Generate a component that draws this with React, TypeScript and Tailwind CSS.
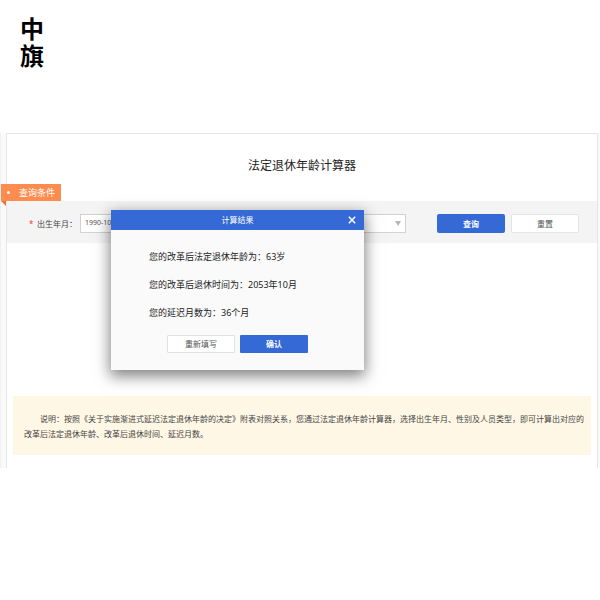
import { useState } from "react";

const results = [
  "您的改革后法定退休年龄为：63岁",
  "您的改革后退休时间为：2053年10月",
  "您的延迟月数为：36个月",
];

function ResultDialog() {
  return (
    <section
      role="dialog"
      aria-labelledby="result-title"
      className="absolute left-[104px] top-[76px] w-[253px] bg-[#fafafa] shadow-[0_5px_14px_1px_rgba(0,0,0,0.5)]"
    >
      <header className="relative flex h-5 items-center justify-center bg-[#3569d6] text-white">
        <h2 id="result-title" className="text-[8px] leading-5">
          计算结果
        </h2>
        <button type="button" aria-label="关闭" className="absolute right-2 top-1.5">
          <svg viewBox="0 0 8 8" className="size-2" fill="none" stroke="currentColor" strokeWidth="1.5">
            <path d="M0.8 0.8 7.2 7.2M7.2 0.8 0.8 7.2" />
          </svg>
        </button>
      </header>
      <div className="flex flex-col gap-2 pl-[38px] pt-[17px] text-[9px] leading-5 text-[#222]">
        {results.map((line) => (
          <p key={line}>{line}</p>
        ))}
      </div>
      <div className="flex justify-center gap-[5px] pb-[17px] pt-3 text-[8px]">
        <button type="button" className="h-[18px] w-[68px] rounded-[1px] border border-[#e2e2e2] bg-white text-[#555]">
          重新填写
        </button>
        <button type="button" className="h-[18px] w-[68px] rounded-[1px] bg-[#3569d6] font-bold text-white">
          确认
        </button>
      </div>
    </section>
  );
}

export default function App() {
  const [month, setMonth] = useState("1990-10");

  return (
    <div className="min-h-screen bg-white font-['Noto_Sans','Noto_Sans_CJK_SC',sans-serif]">
      <header className="flex h-[133px] pl-5 pt-[15px]">
        <h1 className="w-6 text-[24px] font-bold leading-[27px] text-black">中旗</h1>
      </header>

      <main className="border-l border-[#f0f0f0] bg-[#fafafa] pl-[5px] pr-[2px]">
        <div className="relative border-x border-t border-[#e6e6e6] bg-white pb-[13px]">
          <h2 className="pt-[22px] text-center text-[12px] leading-5 text-[#222]">法定退休年龄计算器</h2>

          <div className="-ml-[6px] mt-2 flex">
            <h3 className="relative flex h-[17px] w-[60px] items-center bg-[#ff8c4f] pl-1.5 text-[9px] text-white">
              <span className="mr-[9px] size-[3px] rounded-full bg-white" />
              查询条件
              <svg viewBox="0 0 5 5" className="absolute left-0 top-full size-[5px]">
                <path d="M0 0H5V5Z" fill="#e8743a" />
              </svg>
            </h3>
          </div>

          <form className="flex h-[42px] items-center bg-[#f4f4f4] pl-[22px] pr-[18px] pt-[3px] text-[8px]">
            <label htmlFor="birth" className="flex w-[51px] items-center text-[#444]">
              <span className="w-2 text-[#f03c3c]">*</span>出生年月：
            </label>
            <div className="relative min-w-0 flex-1">
              <select
                id="birth"
                value={month}
                onChange={(e) => setMonth(e.target.value)}
                className="block h-[19px] w-full appearance-none border border-[#d2d2d2] bg-white px-1 text-[7px] text-[#555]"
              >
                <option>1990-10</option>
                <option>1990-11</option>
                <option>1990-12</option>
              </select>
              <svg viewBox="0 0 6 5" className="pointer-events-none absolute right-[5px] top-[7px] h-[5px] w-1.5">
                <path d="M0 0H6L3 5Z" fill="#b5b5b5" />
              </svg>
            </div>
            <button type="button" className="ml-[31px] h-[19px] w-[68px] rounded-[2px] bg-[#3569d6] font-bold text-white">
              查询
            </button>
            <button type="reset" className="ml-1.5 h-[19px] w-[68px] rounded-[2px] border border-[#e4e4e4] bg-white text-[#555]">
              重置
            </button>
          </form>

          <div className="h-[153px]" />

          <p className="mx-1.5 bg-[#fff7e6] pb-[14px] pl-[11px] pr-1 pt-[15px] indent-4 text-[8px] leading-[15px] text-[#444]">
            说明：按照《关于实施渐进式延迟法定退休年龄的决定》附表对照关系，您通过法定退休年龄计算器，选择出生年月、性别及人员类型，即可计算出对应的改革后法定退休年龄、改革后退休时间、延迟月数。
          </p>

          <ResultDialog />
        </div>
      </main>
    </div>
  );
}
